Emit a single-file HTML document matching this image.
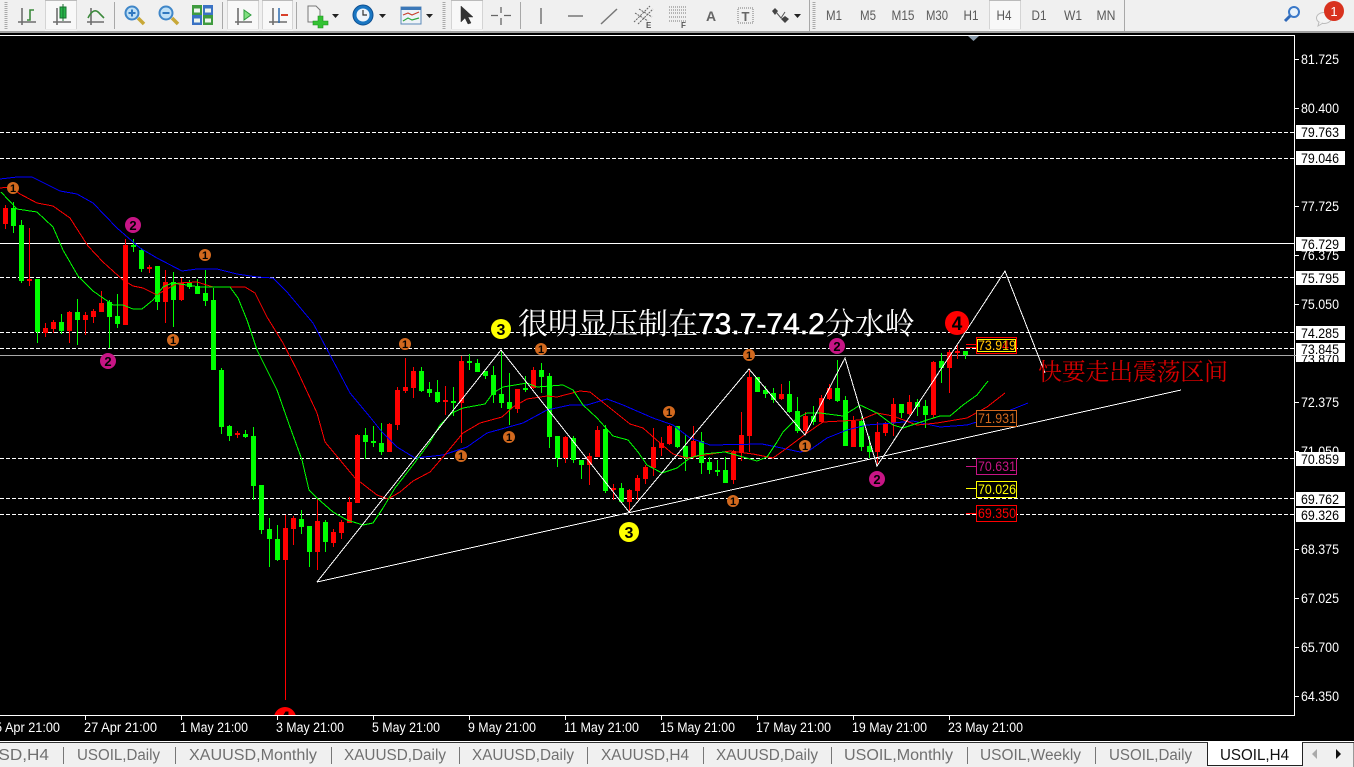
<!DOCTYPE html>
<html><head><meta charset="utf-8"><style>
html,body{margin:0;padding:0;background:#000;width:1354px;height:767px;overflow:hidden}
svg{display:block}
text{font-family:"Liberation Sans","Noto Sans CJK SC",sans-serif}
.tb{font-size:13.5px;fill:#5a5a5a;text-anchor:middle}
.ax{font-size:13.5px;fill:#fff}
.bx{font-size:13.5px;fill:#000}
.tm{font-size:13.5px;fill:#fff}
.tab{font-size:15.5px;fill:#707070}
.n{font-size:11px;fill:#000;text-anchor:middle;font-weight:bold}
</style></head><body>
<svg width="1354" height="767" viewBox="0 0 1354 767" xmlns="http://www.w3.org/2000/svg">
<rect width="1354" height="767" fill="#000"/>
<!-- toolbar -->
<rect width="1354" height="31" fill="#f0f0f0"/>
<rect y="31" width="1354" height="2" fill="#a0a0a0"/>
<g fill="#f8f8f8" stroke="#d4d4d4">
<rect x="45.5" y="0.5" width="31" height="29"/><rect x="227.5" y="0.5" width="31" height="29"/><rect x="262.5" y="0.5" width="30" height="29"/><rect x="451.5" y="0.5" width="31" height="29"/><rect x="989.5" y="0.5" width="31" height="29"/>
</g>
<g stroke="#bbb" fill="none"><path d="M45 .5H77M227 .5H259M262 .5H293M451 .5H483M989 .5H1021"/></g>
<g stroke="#fff" fill="none"><path d="M45 30H77M227 30H259M262 30H293M451 30H483M989 30H1021"/></g>
<g stroke="#a8a8a8" stroke-width="1"><path d="M114.500 2V29M222.500 2V29M296.500 2V29M520.500 2V29M809.500 0V31M1124.500 0V31"/></g>
<g stroke="#aaa" stroke-dasharray="1 1" stroke-width="3"><path d="M6 2V29M444 2V29M814 2V29"/></g>
<!-- chart type icons -->
<g fill="none" stroke="#6e6e6e" stroke-width="1.6">
<path d="M22 8V25M18 22H36M57 8V25M53 22H71M91 8V25M87 22H104M238 8V25M235 22H252M273 8V25M269 22H287"/>
</g>
<path d="M27 20H30V10H34" fill="none" stroke="#3c8a3c" stroke-width="1.6"/>
<rect x="60" y="7" width="6" height="11" fill="#27b54a" stroke="#1a6e30"/><path d="M63 4V21" stroke="#1a6e30"/>
<path d="M88 18Q94 6 100 14L104 18" fill="none" stroke="#3c8a3c" stroke-width="1.6"/>
<path d="M244 10L251 15L244 20Z" fill="#7fe07f" stroke="#2c9a3c"/>
<path d="M279 8V23" stroke="#2a6ab0" stroke-width="1.500"/><path d="M281 15H288" stroke="#d8402a" stroke-width="2"/>
<!-- zoom -->
<g><path d="M138 18L144 24" stroke="#c8a838" stroke-width="3.500"/><circle cx="132" cy="13" r="6.500" fill="#bfe0f6" stroke="#3f86c8" stroke-width="2"/><path d="M128.500 13H135.500M132 9.500V16.500" stroke="#2f78c0" stroke-width="2"/>
<path d="M172 18L178 24" stroke="#c8a838" stroke-width="3.500"/><circle cx="166" cy="13" r="6.500" fill="#bfe0f6" stroke="#3f86c8" stroke-width="2"/><path d="M162.500 13H169.500" stroke="#2f78c0" stroke-width="2"/></g>
<!-- tile -->
<rect x="192" y="5" width="10" height="10" fill="#3f9b3f"/><rect x="203" y="5" width="10" height="10" fill="#3a72c4"/><rect x="192" y="15" width="10" height="10" fill="#3a72c4"/><rect x="203" y="15" width="10" height="10" fill="#3f9b3f"/>
<path d="M194 10.500H200M205 10.500H211M194 20.500H200M205 20.500H211" stroke="#eef6ee" stroke-width="4"/>
<!-- new chart -->
<path d="M308 6H316L320 10V22H308Z" fill="#f4f4f4" stroke="#777"/><path d="M318 16H323V21H328V25H323V28H318V25H313V21H318Z" fill="#33c233" stroke="#1e8e1e" stroke-width=".6"/>
<path d="M332 14H339L335.500 18Z" fill="#222"/>
<!-- clock -->
<circle cx="363" cy="15" r="10" fill="#1a76c2" stroke="#0e4f90"/><circle cx="363" cy="15" r="6.500" fill="#eef4fa"/><path d="M363 10V15H367" stroke="#333" stroke-width="1.200" fill="none"/>
<path d="M379 14H386L382.500 18Z" fill="#222"/>
<!-- templates -->
<rect x="401" y="7" width="20" height="17" fill="#eef3f8" stroke="#5b8ab8"/><rect x="401" y="7" width="20" height="3" fill="#3b78b8"/><path d="M403 15L408 13L412 15L419 12" stroke="#c8402a" fill="none" stroke-width="1.200"/><path d="M403 21L408 18L412 20L419 18" stroke="#2fa83f" fill="none" stroke-width="1.200"/>
<path d="M426 14H433L429.500 18Z" fill="#222"/>
<!-- cursor etc -->
<path d="M461 6V22L465 18L468 24L471 23L468 17H473Z" fill="#333" stroke="#333" stroke-width=".5"/>
<path d="M501 7V13M501 18V25M491 15.500H498M504 15.500H511" stroke="#666" stroke-width="1.300"/>
<path d="M541 8V24" stroke="#777" stroke-width="1.500"/>
<path d="M568 16H583" stroke="#777" stroke-width="1.500"/>
<path d="M601 24L617 9" stroke="#777" stroke-width="1.500"/>
<g stroke="#666" fill="none"><path d="M634 22L650 6M638 24L653 9M635 13L648 21M639 9L652 17" stroke-dasharray="2 1"/></g>
<text x="646" y="28" font-size="8" font-weight="bold" fill="#555">E</text>
<g stroke="#777" stroke-dasharray="1 1"><path d="M669 7H686M669 10H686M669 13H686M669 17H686M669 21H686"/></g>
<text x="681" y="28" font-size="8" font-weight="bold" fill="#555">F</text>
<text x="711" y="21" font-size="14" font-weight="bold" fill="#666" text-anchor="middle">A</text>
<rect x="738" y="8" width="15" height="15" fill="none" stroke="#777" stroke-dasharray="1 1"/><text x="745.500" y="21" font-size="13" font-weight="bold" fill="#666" text-anchor="middle">T</text>
<path d="M775 8l3 3-3 4-3-4ZM785 16l4 3-4 4-4-4Z" fill="#444"/><path d="M776 12L781 18L785 12" stroke="#555" fill="none"/>
<path d="M794 14H801L797.500 18Z" fill="#222"/>
<!-- timeframes -->
<text class="tb" x="834" y="20" textLength="16" lengthAdjust="spacingAndGlyphs">M1</text><text class="tb" x="868" y="20" textLength="16" lengthAdjust="spacingAndGlyphs">M5</text><text class="tb" x="903" y="20" textLength="23" lengthAdjust="spacingAndGlyphs">M15</text><text class="tb" x="937" y="20" textLength="22" lengthAdjust="spacingAndGlyphs">M30</text><text class="tb" x="971" y="20" textLength="15" lengthAdjust="spacingAndGlyphs">H1</text><text class="tb" x="1004" y="20" textLength="15" lengthAdjust="spacingAndGlyphs">H4</text><text class="tb" x="1039" y="20" textLength="15" lengthAdjust="spacingAndGlyphs">D1</text><text class="tb" x="1073" y="20" textLength="18" lengthAdjust="spacingAndGlyphs">W1</text><text class="tb" x="1106" y="20" textLength="19" lengthAdjust="spacingAndGlyphs">MN</text>
<!-- search + notif -->
<circle cx="1294" cy="12" r="5" fill="#e8f2fb" stroke="#3a78c8" stroke-width="2"/><path d="M1290 16L1285 21" stroke="#2f68b8" stroke-width="3"/>
<ellipse cx="1324" cy="18" rx="7.500" ry="5.500" fill="#f4f4f4" stroke="#bbb"/><path d="M1319 22L1318 26L1323 23" fill="#f4f4f4" stroke="#bbb"/>
<circle cx="1334" cy="11" r="10" fill="#d8321e"/><text x="1334" y="16" font-size="13" fill="#fff" text-anchor="middle">1</text>

<!-- chart frame -->
<path d="M0 35.500H1294.500V715.500H0" fill="none" stroke="#fff" shape-rendering="crispEdges"/>
<path d="M968 36H979L973.500 41Z" fill="#8a9bab"/>
<g stroke="#fff" shape-rendering="crispEdges"><path d="M1295 59.500h4M1295 108.500h4M1295 206.500h4M1295 255.500h4M1295 304.500h4M1295 402.500h4M1295 451.500h4M1295 549.500h4M1295 598.500h4M1295 647.500h4M1295 696.500h4M85.500 716v4M181.500 716v4M277.500 716v4M373.500 716v4M469.500 716v4M565.500 716v4M661.500 716v4M757.500 716v4M853.500 716v4M949.500 716v4"/></g>

<svg x="0" y="36" width="1294" height="679" viewBox="0 36 1294 679">
<!-- levels -->
<g stroke="#fff" shape-rendering="crispEdges" stroke-dasharray="4 2"><path d="M0 132.500H1294M0 158.500H1294M0 277.500H1294M0 332.500H1294M0 348.500H1294M0 458.500H1294M0 498.500H1294M0 514.500H1294"/></g>
<path d="M0 243.500H1294" stroke="#fff" shape-rendering="crispEdges"/>
<path d="M0 355.500H1294" stroke="#a8a8a8" shape-rendering="crispEdges"/>

<g transform="translate(.5 0)" shape-rendering="crispEdges" fill="none">
<path stroke="#f00" d="M5 205V229M29 228V286M45 323V337M53 320V333M69 311V343M85 312V335M93 309V323M101 291V312M125 239V325M149 265V273M165 270V323M181 278V301M237 431V438M285 515V700M293 516V545M317 499V570M333 529V547M341 520V539M349 497V523M357 434V503M389 423V452M397 387V430M405 358V393M413 367V398M445 386V415M461 356V443M517 389V413M533 367V389M565 436V463M589 453V485M597 426V457M613 484V500M629 489V512M637 475V500M645 465V484M653 428V476M661 437V456M669 425V445M693 426V459M733 450V484M741 412V461M749 369V452M781 384V400M805 412V435M821 395V422M829 384V400M853 416V447M877 422V464M885 422V436M893 398V436M909 395V415M933 361V418M949 350V393M957 345V359"/>
<path stroke="#f00" stroke-width="5" d="M5 208V224M29 279V281M45 328V333M53 322V329M69 312V331M85 315V320M93 311V317M101 303V312M125 245V325M149 267V269M165 282V302M181 283V300M237 433V435M285 528V560M293 518V529M317 521V552M333 532V543M341 522V533M349 502V523M357 435V503M389 424V452M397 390V425M405 387V391M413 371V388M445 400V402M461 361V403M517 389V409M533 370V388M565 437V458M589 456V465M597 430V457M613 488V490M629 490V502M637 478V491M645 467V479M653 447V468M661 443V448M669 426V444M693 441V457M733 452V480M741 435V453M749 377V436M781 394V399M805 416V431M821 398V422M829 388V399M853 421V447M877 432V452M885 424V433M893 404V423M909 402V414M933 362V415M949 352V368M957 351V353"/>
<path stroke="#0f0" d="M13 202V233M21 220V283M37 279V343M61 314V334M77 299V345M109 300V348M117 294V328M133 239V252M141 248V272M157 266V310M173 272V327M189 280V289M197 279V294M205 270V306M213 288V370M221 368V434M229 425V441M245 430V438M253 427V500M261 485V534M269 518V567M277 525V561M301 510V534M309 526V567M325 520V552M365 428V459M373 426V447M381 423V455M421 367V392M429 382V397M437 380V403M453 387V416M469 354V370M477 359V372M485 371V379M493 366V403M501 350V408M509 373V425M525 376V392M541 363V393M549 373V448M557 436V467M573 436V463M581 460V479M605 425V493M621 483V502M677 426V448M685 434V471M701 432V474M709 457V474M717 460V476M725 457V483M757 377V392M765 386V398M773 388V403M789 381V413M797 397V433M813 406V425M837 360V402M845 396V446M861 417V451M869 436V458M901 404V418M917 399V416M925 400V428M941 353V383M965 351V359"/>
<path stroke="#0f0" stroke-width="5" d="M13 208V226M21 225V281M37 279V332M61 322V331M77 312V320M109 302V317M117 316V324M133 245V247M141 250V269M157 266V302M173 282V300M189 283V287M197 286V294M205 293V301M213 300V370M221 370V427M229 426V436M245 434V437M253 436V486M261 485V530M269 529V539M277 539V560M301 519V527M309 526V552M325 522V542M365 435V442M373 441V443M381 443V452M421 371V391M429 389V393M437 392V402M453 401V403M469 361V363M477 363V372M485 371V376M493 375V395M501 394V403M509 402V409M525 388V390M541 370V377M549 376V437M557 436V458M573 438V460M581 460V465M605 429V491M621 488V502M677 426V447M685 446V458M701 441V463M709 462V470M717 470V472M725 470V483M757 377V392M765 390V394M773 393V400M789 394V412M797 411V431M813 416V422M837 388V401M845 400V446M861 421V447M869 446V452M901 404V413M917 402V407M925 406V415M941 361V368M965 351V355"/>
</g>

<g fill="none" shape-rendering="crispEdges">
<polyline stroke="#00f" points="0,179 17,177 32,177 60,191 77,194 93,203 117,228 140,248 157,258 182,271 197,269 217,269 237,274 257,277 273,278 287,292 313,323 338,370 350,393 370,417 382,432 397,447 415,458 443,455 467,447 487,433 523,423 547,410 570,405 587,405 607,399 623,405 653,418 673,425 690,438 710,445 762,444 777,447 800,452 810,450 827,438 847,430 867,425 893,423 913,421 940,427 967,425 993,417 1028,403"/>
<polyline stroke="#f00" points="0,188 10,187 20,194 37,203 53,206 70,218 88,246 103,262 123,280 133,286 143,288 157,295 165,290 178,283 197,282 213,287 245,287 255,293 267,317 283,343 297,370 317,413 325,442 340,460 355,478 377,495 388,499 400,492 413,481 430,472 443,457 463,433 480,423 502,417 513,407 527,399 547,396 557,397 580,391 590,392 610,408 630,424 643,428 660,443 673,454 687,458 705,455 730,451 753,454 773,458 787,448 807,433 823,422 860,420 877,413 893,416 917,425 937,423 967,418 987,407 1005,393"/>
<polyline stroke="#0f0" points="1,192 17,209 37,212 53,227 63,250 78,276 93,291 113,305 123,305 133,309 142,309 153,300 163,287 172,283 187,285 200,287 230,287 238,298 247,320 257,350 267,370 277,390 290,427 302,460 309,490 317,498 333,512 347,520 363,525 373,523 383,508 395,488 413,465 430,442 440,425 452,413 463,408 485,404 493,393 503,387 527,383 537,387 563,385 573,390 583,405 597,418 613,436 628,440 638,452 647,465 662,473 677,468 690,458 703,454 725,452 743,457 757,461 767,457 777,442 783,432 797,418 807,413 820,413 843,416 860,405 877,413 893,425 903,428 927,420 940,416 950,416 963,405 977,395 988,381"/>
<polyline stroke="#fff" points="317,582 501,350 629,512 749,369 805,435 845,358 877,466 957,345 1005,271 1045,373"/>
<path stroke="#fff" d="M317 582L1181 390"/>
</g>

<!-- markers -->
<g fill="#d2691e"><circle cx="13" cy="188" r="6"/><circle cx="205" cy="255" r="6"/><circle cx="173" cy="340" r="6"/><circle cx="405" cy="344" r="6"/><circle cx="541" cy="349" r="6"/><circle cx="461" cy="456" r="6"/><circle cx="509" cy="437" r="6"/><circle cx="669" cy="412" r="6"/><circle cx="749" cy="355" r="6"/><circle cx="805" cy="446" r="6"/><circle cx="733" cy="501" r="6"/></g>
<g><text class="n" x="13" y="192">1</text><text class="n" x="205" y="259">1</text><text class="n" x="173" y="344">1</text><text class="n" x="405" y="348">1</text><text class="n" x="541" y="353">1</text><text class="n" x="461" y="460">1</text><text class="n" x="509" y="441">1</text><text class="n" x="669" y="416">1</text><text class="n" x="749" y="359">1</text><text class="n" x="805" y="450">1</text><text class="n" x="733" y="505">1</text></g>
<g fill="#c71585"><circle cx="133" cy="225" r="8"/><circle cx="108" cy="361" r="8"/><circle cx="837" cy="346" r="8"/><circle cx="877" cy="479" r="8"/></g>
<g font-size="13" font-weight="bold" fill="#000" text-anchor="middle"><text x="133" y="230">2</text><text x="108" y="366">2</text><text x="837" y="351">2</text><text x="877" y="484">2</text></g>
<g fill="#ff0"><circle cx="501" cy="329" r="10"/><circle cx="629" cy="532" r="10"/></g>
<g font-size="16" font-weight="bold" fill="#000" text-anchor="middle"><text x="501" y="335">3</text><text x="629" y="538">3</text></g>
<g fill="#f00"><circle cx="957" cy="323" r="12"/><circle cx="285" cy="718" r="11"/></g>
<g font-size="19" font-weight="bold" fill="#000" text-anchor="middle"><text x="957" y="330">4</text><text x="285" y="725">4</text></g>

<!-- annotations -->
<text x="518" y="334" font-size="30" fill="#fff" style="font-family:'Liberation Sans','Noto Serif CJK SC',serif">很明显压制在<tspan stroke="#fff" stroke-width=".5">73.7-74.2</tspan>分水岭</text>
<text x="1038" y="380" font-size="24" fill="#d40000" style="font-family:'Noto Serif CJK SC',serif" textLength="190">快要走出震荡区间</text>

<!-- level boxes -->
<g fill="#000" shape-rendering="crispEdges">
<path d="M966 344.500H976M966 347.500H976" stroke="#f00"/>
<path d="M966 466.500H976" stroke="#c71585"/><path d="M966 488.500H976" stroke="#ff0"/><path d="M966 513.500H976" stroke="#f00"/>
<rect x="976.500" y="337.500" width="40" height="16" stroke="#f00"/><rect x="977.500" y="339.500" width="38" height="12" stroke="#ff0"/>
<rect x="976.500" y="410.500" width="40" height="16" stroke="#d2691e"/>
<rect x="976.500" y="458.500" width="40" height="16" stroke="#c71585"/>
<rect x="976.500" y="481.500" width="40" height="16" stroke="#ff0"/>
<rect x="976.500" y="505.500" width="40" height="16" stroke="#f00"/>
</g>
<g font-size="13.500">
<text x="978" y="350" fill="#f00" textLength="38" lengthAdjust="spacingAndGlyphs">73.949</text><text x="978" y="350" fill="#ff0" textLength="38" lengthAdjust="spacingAndGlyphs" opacity=".8">73.919</text>
<text x="978" y="423" fill="#d2691e" textLength="38" lengthAdjust="spacingAndGlyphs">71.931</text>
<text x="978" y="471" fill="#c71585" textLength="38" lengthAdjust="spacingAndGlyphs">70.631</text>
<text x="978" y="494" fill="#ff0" textLength="38" lengthAdjust="spacingAndGlyphs">70.026</text>
<text x="978" y="518" fill="#f00" textLength="38" lengthAdjust="spacingAndGlyphs">69.350</text>
</g>
</svg>

<!-- price axis -->
<g>
<text class="ax" x="1301" y="64" textLength="38" lengthAdjust="spacingAndGlyphs">81.725</text>
<text class="ax" x="1301" y="113" textLength="38" lengthAdjust="spacingAndGlyphs">80.400</text>
<text class="ax" x="1301" y="211" textLength="38" lengthAdjust="spacingAndGlyphs">77.725</text>
<text class="ax" x="1301" y="260" textLength="38" lengthAdjust="spacingAndGlyphs">76.375</text>
<text class="ax" x="1301" y="309" textLength="38" lengthAdjust="spacingAndGlyphs">75.050</text>
<text class="ax" x="1301" y="407" textLength="38" lengthAdjust="spacingAndGlyphs">72.375</text>
<text class="ax" x="1301" y="456" textLength="38" lengthAdjust="spacingAndGlyphs">71.050</text>
<text class="ax" x="1301" y="554" textLength="38" lengthAdjust="spacingAndGlyphs">68.375</text>
<text class="ax" x="1301" y="603" textLength="38" lengthAdjust="spacingAndGlyphs">67.025</text>
<text class="ax" x="1301" y="652" textLength="38" lengthAdjust="spacingAndGlyphs">65.700</text>
<text class="ax" x="1301" y="701" textLength="38" lengthAdjust="spacingAndGlyphs">64.350</text>
</g>
<g fill="#fff" shape-rendering="crispEdges">
<rect x="1296" y="125" width="49" height="14"/><rect x="1296" y="151" width="49" height="14"/><rect x="1296" y="237" width="49" height="14"/><rect x="1296" y="271" width="49" height="14"/><rect x="1296" y="326" width="49" height="14"/><rect x="1296" y="343" width="49" height="19"/><rect x="1296" y="452" width="49" height="14"/><rect x="1296" y="492" width="49" height="14"/><rect x="1296" y="508" width="49" height="14"/>
</g>
<path d="M1294 355.500H1296" stroke="#a8a8a8"/>
<clipPath id="c1"><rect x="1296" y="355" width="49" height="7"/></clipPath>
<g>
<text class="bx" x="1301" y="137" textLength="38" lengthAdjust="spacingAndGlyphs">79.763</text>
<text class="bx" x="1301" y="163" textLength="38" lengthAdjust="spacingAndGlyphs">79.046</text>
<text class="bx" x="1301" y="249" textLength="38" lengthAdjust="spacingAndGlyphs">76.729</text>
<text class="bx" x="1301" y="283" textLength="38" lengthAdjust="spacingAndGlyphs">75.795</text>
<text class="bx" x="1301" y="338" textLength="38" lengthAdjust="spacingAndGlyphs">74.285</text>
<text class="bx" x="1301" y="364" textLength="38" lengthAdjust="spacingAndGlyphs" clip-path="url(#c1)">73.870</text>
<text class="bx" x="1301" y="354" textLength="38" lengthAdjust="spacingAndGlyphs">73.845</text>
<text class="bx" x="1301" y="464" textLength="38" lengthAdjust="spacingAndGlyphs">70.859</text>
<text class="bx" x="1301" y="504" textLength="38" lengthAdjust="spacingAndGlyphs">69.762</text>
<text class="bx" x="1301" y="520" textLength="38" lengthAdjust="spacingAndGlyphs">69.326</text>
</g>

<!-- time axis -->
<g>
<text class="tm" x="-12" y="732" textLength="72" lengthAdjust="spacingAndGlyphs">25 Apr 21:00</text>
<text class="tm" x="84" y="732" textLength="73" lengthAdjust="spacingAndGlyphs">27 Apr 21:00</text>
<text class="tm" x="180" y="732" textLength="68" lengthAdjust="spacingAndGlyphs">1 May 21:00</text>
<text class="tm" x="276" y="732" textLength="68" lengthAdjust="spacingAndGlyphs">3 May 21:00</text>
<text class="tm" x="372" y="732" textLength="68" lengthAdjust="spacingAndGlyphs">5 May 21:00</text>
<text class="tm" x="468" y="732" textLength="68" lengthAdjust="spacingAndGlyphs">9 May 21:00</text>
<text class="tm" x="564" y="732" textLength="75" lengthAdjust="spacingAndGlyphs">11 May 21:00</text>
<text class="tm" x="660" y="732" textLength="75" lengthAdjust="spacingAndGlyphs">15 May 21:00</text>
<text class="tm" x="756" y="732" textLength="75" lengthAdjust="spacingAndGlyphs">17 May 21:00</text>
<text class="tm" x="852" y="732" textLength="75" lengthAdjust="spacingAndGlyphs">19 May 21:00</text>
<text class="tm" x="948" y="732" textLength="75" lengthAdjust="spacingAndGlyphs">23 May 21:00</text>
</g>

<!-- tabs -->
<rect y="741" width="1354" height="1" fill="#fff"/>
<rect y="742" width="1354" height="1" fill="#333"/>
<rect y="743" width="1354" height="24" fill="#f0f0f0"/>
<g stroke="#777" shape-rendering="crispEdges"><path d="M63.500 747V764M175.500 747V764M331.500 747V764M459.500 747V764M587.500 747V764M703.500 747V764M831.500 747V764M967.500 747V764M1095.500 747V764"/></g>
<path d="M1207.500 743V765.500H1302.500V743" fill="#fff" stroke="#222" shape-rendering="crispEdges"/>
<rect x="1208" y="741" width="94" height="3" fill="#fff"/>
<path d="M1353.500 743V767" stroke="#999"/>
<g>
<text class="tab" x="-14" y="760" textLength="63" lengthAdjust="spacingAndGlyphs">USD,H4</text>
<text class="tab" x="77" y="760" textLength="83" lengthAdjust="spacingAndGlyphs">USOIL,Daily</text>
<text class="tab" x="189" y="760" textLength="128" lengthAdjust="spacingAndGlyphs">XAUUSD,Monthly</text>
<text class="tab" x="344" y="760" textLength="102" lengthAdjust="spacingAndGlyphs">XAUUSD,Daily</text>
<text class="tab" x="472" y="760" textLength="102" lengthAdjust="spacingAndGlyphs">XAUUSD,Daily</text>
<text class="tab" x="601" y="760" textLength="88" lengthAdjust="spacingAndGlyphs">XAUUSD,H4</text>
<text class="tab" x="716" y="760" textLength="102" lengthAdjust="spacingAndGlyphs">XAUUSD,Daily</text>
<text class="tab" x="844" y="760" textLength="109" lengthAdjust="spacingAndGlyphs">USOIL,Monthly</text>
<text class="tab" x="980" y="760" textLength="101" lengthAdjust="spacingAndGlyphs">USOIL,Weekly</text>
<text class="tab" x="1109" y="760" textLength="83" lengthAdjust="spacingAndGlyphs">USOIL,Daily</text>
<text class="tab" x="1220" y="760" textLength="69" lengthAdjust="spacingAndGlyphs" style="fill:#111">USOIL,H4</text>
</g>
<path d="M1317 749V759L1312 754Z" fill="#aaa"/>
<path d="M1336 749V759L1341 754Z" fill="#111"/>
</svg>
</body></html>
